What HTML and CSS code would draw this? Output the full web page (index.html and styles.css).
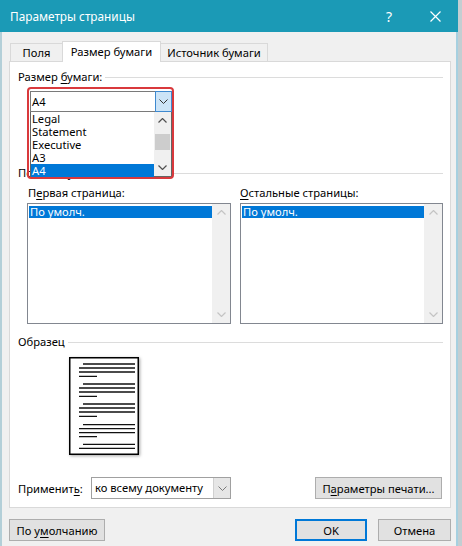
FILE: index.html
```html
<!DOCTYPE html>
<html lang="ru">
<head>
<meta charset="utf-8">
<title>Параметры страницы</title>
<link rel="stylesheet" href="styles.css">
</head>
<body>
<div class="dialog">
  <div class="titlebar">
    <span class="title">Параметры страницы</span>
    <span class="help">?</span>
    <svg class="close" width="11" height="11" viewBox="0 0 11 11"><path d="M0.5 0.5 L10.5 10.5 M10.5 0.5 L0.5 10.5" stroke="#fff" stroke-width="1.2" fill="none"/></svg>
  </div>
  <div class="main">
    <div class="tabs">
      <div class="tab tab-fields">Поля</div>
      <div class="tab tab-size active">Размер бумаги</div>
      <div class="tab tab-source">Источник бумаги</div>
    </div>
    <div class="panel">
      <div class="group"><span class="group-label">Размер <u>б</u>умаги:</span><span class="group-line"></span></div>
      <div class="size-area">
        <div class="combo-wrap">
          <div class="field">
            <span class="field-text">A4</span>
            <span class="drop-btn drop-btn-hot"><svg width="9" height="5" viewBox="0 0 9 5"><polyline points="0.5,0.5 4.5,4.5 8.5,0.5" stroke="#333" stroke-width="1" fill="none"/></svg></span>
          </div>
          <div class="droplist">
            <div class="dl-items">
              <div class="dl-item">Legal</div>
              <div class="dl-item">Statement</div>
              <div class="dl-item">Executive</div>
              <div class="dl-item">A3</div>
              <div class="dl-item dl-sel">A4</div>
            </div>
            <div class="dl-sb">
              <span class="sb-arrow"><svg width="9" height="5" viewBox="0 0 9 5"><polyline points="0.5,4.5 4.5,0.5 8.5,4.5" stroke="#505050" stroke-width="1.2" fill="none"/></svg></span>
              <span class="sb-thumb"></span>
              <span class="sb-fill"></span>
              <span class="sb-arrow"><svg width="9" height="5" viewBox="0 0 9 5"><polyline points="0.5,0.5 4.5,4.5 8.5,0.5" stroke="#505050" stroke-width="1.2" fill="none"/></svg></span>
            </div>
          </div>
          <div class="red-frame"></div>
        </div>
      </div>
      <div class="group"><span class="group-label">Подача бумаги</span><span class="group-line"></span></div>
      <div class="trays">
        <div class="tray">
          <div class="tray-label">П<u>е</u>рвая страница:</div>
          <div class="listbox">
            <div class="lb-items"><div class="lb-sel">По умолч.</div></div>
            <div class="lb-sb">
              <span class="sb-arrow"><svg width="9" height="5" viewBox="0 0 9 5"><polyline points="0.5,4.5 4.5,0.5 8.5,4.5" stroke="#c4c4c4" stroke-width="1.2" fill="none"/></svg></span>
              <span class="sb-arrow"><svg width="9" height="5" viewBox="0 0 9 5"><polyline points="0.5,0.5 4.5,4.5 8.5,0.5" stroke="#c4c4c4" stroke-width="1.2" fill="none"/></svg></span>
            </div>
          </div>
        </div>
        <div class="tray">
          <div class="tray-label tray-label-right"><u>О</u>стальные страницы:</div>
          <div class="listbox">
            <div class="lb-items"><div class="lb-sel">По умолч.</div></div>
            <div class="lb-sb">
              <span class="sb-arrow"><svg width="9" height="5" viewBox="0 0 9 5"><polyline points="0.5,4.5 4.5,0.5 8.5,4.5" stroke="#c4c4c4" stroke-width="1.2" fill="none"/></svg></span>
              <span class="sb-arrow"><svg width="9" height="5" viewBox="0 0 9 5"><polyline points="0.5,0.5 4.5,4.5 8.5,0.5" stroke="#c4c4c4" stroke-width="1.2" fill="none"/></svg></span>
            </div>
          </div>
        </div>
      </div>
      <div class="group group-sample"><span class="group-label">Образец</span><span class="group-line"></span></div>
      <div class="preview">
        <svg width="70" height="98" viewBox="0 0 70 98">
          <rect x="0.75" y="0.75" width="68.5" height="96.5" fill="#fff" stroke="#000" stroke-width="1.5"/>
          <g stroke="#111" stroke-width="1.3">
            <path d="M14 7 H66 M10 11 H66 M10 15 H66 M10 19.3 H28"/>
            <path d="M14 27 H66 M10 31 H66 M10 35 H66 M10 39.3 H28"/>
            <path d="M14 47 H66 M10 51 H66 M10 55 H66 M10 59.3 H28"/>
            <path d="M14 67.7 H66 M10 71.7 H66 M10 75.7 H66 M10 79.7 H28"/>
            <path d="M14 87.3 H66 M10 91.3 H66"/>
          </g>
        </svg>
      </div>
      <div class="apply-row">
        <span class="apply-label">Применит<u>ь</u>:</span>
        <div class="combo-apply">
          <span class="field-text">ко всему документу</span>
          <span class="drop-btn drop-btn-gray"><svg width="9" height="5" viewBox="0 0 9 5"><polyline points="0.5,0.5 4.5,4.5 8.5,0.5" stroke="#7a7a7a" stroke-width="1" fill="none"/></svg></span>
        </div>
        <span class="spacer"></span>
        <button class="btn btn-print">П<u>а</u>раметры печати...</button>
      </div>
    </div>
    <div class="footer">
      <button class="btn btn-default">По у<u>м</u>олчанию</button>
      <span class="spacer"></span>
      <button class="btn btn-ok">OK</button>
      <button class="btn btn-cancel">Отмена</button>
    </div>
  </div>
</div>
</body>
</html>
```
FILE: styles.css
```css
* { box-sizing: border-box; }
html, body { margin: 0; padding: 0; }
body {
  width: 462px;
  height: 546px;
  overflow: hidden;
  background: #c3ced2;
  font-family: "Noto Sans", "DejaVu Sans", sans-serif;
  font-size: 11.2px;
  color: #000;
}
u { text-decoration-thickness: 1px; text-underline-offset: 2px; }

.dialog {
  width: 458px;
  height: 546px;
  display: flex;
  flex-direction: column;
}
.titlebar {
  height: 32px;
  flex: none;
  background: #1b9ab6;
  color: #fff;
  display: flex;
  align-items: center;
  padding-left: 10px;
  padding-right: 17px;
}
.title { flex: 1; font-size: 11.8px; }
.help { width: 20px; text-align: center; font-size: 14px; margin-right: 31px; }
.close { display: block; }

.main {
  flex: 1;
  background: #f0f0f0;
  border-left: 2px solid #b3cfd8;
  border-right: 2px solid #a6d0e0;
  padding: 9px 5px 0 7px;
  display: flex;
  flex-direction: column;
}
.tabs {
  display: flex;
  align-items: flex-end;
  height: 20px;
  padding-left: 1px;
}
.tab {
  height: 18px;
  border: 1px solid #d9d9d9;
  border-bottom: none;
  background: #f0f0f0;
  display: flex;
  align-items: center;
  justify-content: center;
}
.tab-fields { width: 52px; border-right: none; }
.tab-size { width: 99px; }
.tab-source { width: 107px; border-left: none; }
.tab.active {
  height: 21px;
  margin-bottom: -1px;
  background: #fff;
  position: relative;
  z-index: 1;
  padding-bottom: 2px;
}

.panel {
  height: 447px;
  background: #fff;
  border: 1px solid #d9d9d9;
  padding: 7px 7px 0 8px;
  display: flex;
  flex-direction: column;
}
.group {
  height: 16px;
  display: flex;
  align-items: center;
  flex: none;
}
.group-label { white-space: nowrap; line-height: 16px; }
.group-line { flex: 1; height: 1px; background: #dcdcdc; margin-left: 3px; margin-top: 1px; }

.size-area { height: 74px; margin-top: 6px; flex: none; padding-left: 12px; }
.combo-wrap { position: relative; width: 142px; height: 21px; }
.field {
  height: 21px;
  border: 1px solid #7a7a7a;
  background: #fff;
  display: flex;
  align-items: stretch;
}
.field-text { flex: 1; line-height: 19px; padding-left: 1px; white-space: nowrap; }
.drop-btn {
  width: 17px;
  display: flex;
  align-items: center;
  justify-content: center;
}
.drop-btn svg { display: block; }
.drop-btn-hot {
  background: #cce4f7;
  border: 1px solid #3e89cf;
  margin: -1px -1px -1px 0;
}
.droplist {
  position: absolute;
  left: 0;
  top: 21px;
  width: 142px;
  height: 65px;
  background: #fff;
  border: 1px solid #646464;
  border-top: none;
  display: flex;
  z-index: 2;
}
.dl-items { flex: 1; }
.dl-item { height: 13px; line-height: 13px; padding-left: 1px; white-space: nowrap; }
.dl-sel { background: #0078d7; color: #fff; }
.dl-sb {
  width: 17px;
  background: #f0f0f0;
  display: flex;
  flex-direction: column;
}
.sb-arrow {
  height: 17px;
  display: flex;
  align-items: center;
  justify-content: center;
  flex: none;
}
.sb-arrow svg { display: block; }
.sb-thumb { height: 16px; margin: 5px 1px 0 1px; background: #cdcdcd; flex: none; }
.sb-fill { flex: 1; }
.red-frame {
  position: absolute;
  left: -3px;
  top: -4px;
  width: 147px;
  height: 92px;
  border: 2.5px solid #d9393c;
  border-radius: 4px;
  z-index: 3;
  pointer-events: none;
}

.trays {
  margin-top: 4px;
  margin-left: 9px;
  display: grid;
  grid-template-columns: 204px 203px;
  column-gap: 9px;
  flex: none;
}
.tray-label { height: 16px; line-height: 16px; padding-left: 1px; margin-bottom: 2px; white-space: nowrap; }
.tray-label-right { padding-left: 0; }
.listbox {
  height: 121px;
  border: 1px solid #828790;
  background: #fff;
  display: flex;
  padding: 1px 0 0 1px;
}
.lb-items { flex: 1; padding-top: 1px; }
.lb-sel { background: #0078d7; color: #fff; height: 12px; line-height: 12px; padding-left: 1px; white-space: nowrap; }
.lb-sb {
  width: 18px;
  margin-top: -1px;
  background: #f0f0f0;
  display: flex;
  flex-direction: column;
  justify-content: space-between;
}

.group-sample { margin-top: 10px; }
.preview { margin-top: 7px; margin-left: 51px; width: 70px; height: 98px; flex: none; box-shadow: 1px 1px 3px rgba(0,0,0,0.35); }
.preview svg { display: block; }

.apply-row {
  margin-top: 22px;
  height: 22px;
  display: flex;
  align-items: center;
  flex: none;
  padding-right: 1px;
}
.apply-label { width: 73px; white-space: nowrap; }
.combo-apply {
  width: 140px;
  height: 22px;
  border: 1px solid #a0a0a0;
  background: #fff;
  display: flex;
}
.combo-apply .field-text { line-height: 20px; padding-left: 3px; }
.drop-btn-gray { width: 17px; background: #e6e6e6; border-left: 1px solid #d0d0d0; }
.spacer { flex: 1; }

.btn {
  font-family: inherit;
  font-size: 11.2px;
  color: #000;
  height: 22px;
  background: #e1e1e1;
  border: 1px solid #adadad;
  padding: 0;
  margin: 0;
  display: flex;
  align-items: center;
  justify-content: center;
}
.btn-print { width: 127px; }
.footer {
  margin-top: 11px;
  display: flex;
  height: 22px;
}
.btn-default { width: 96px; }
.btn-ok { width: 72px; border: 2px solid #0078d7; }
.btn-cancel { width: 73px; margin-left: 11px; }
```
